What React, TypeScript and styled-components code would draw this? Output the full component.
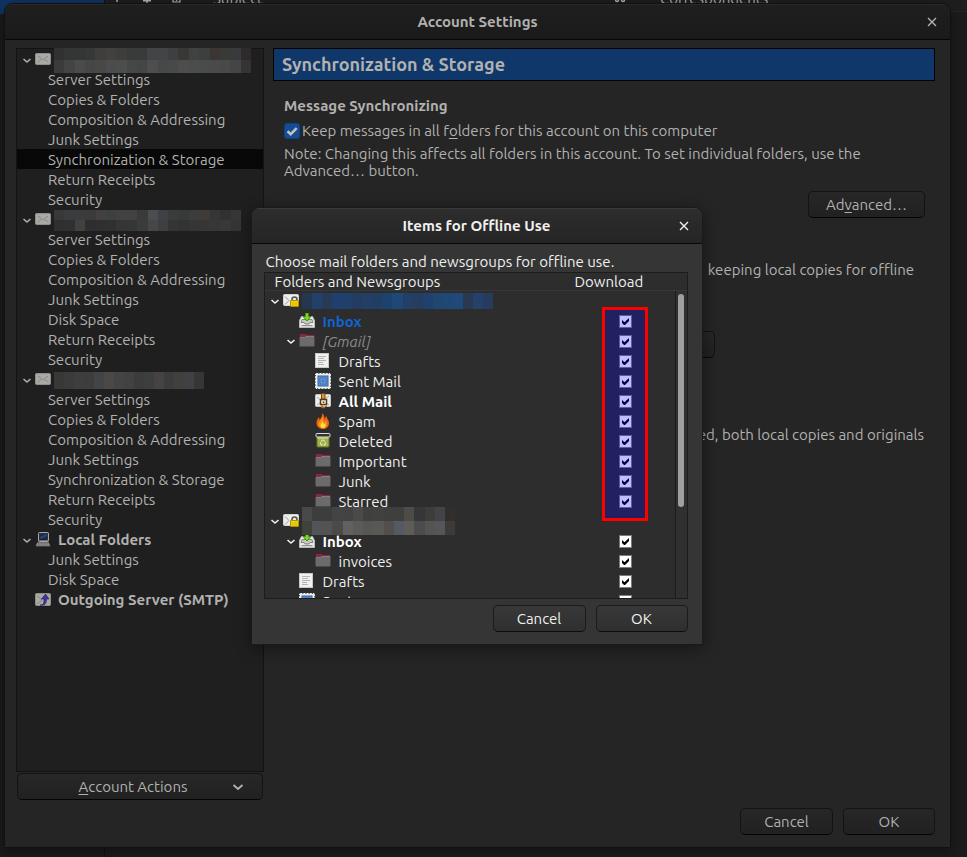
import React from 'react';
import styled, { createGlobalStyle, css } from 'styled-components';

const GlobalStyle = createGlobalStyle`
  *, *::before, *::after { box-sizing: border-box; }
  body {
    margin: 0;
    background: #1a1a1a;
    font-family: Ubuntu, "Noto Sans", sans-serif;
    font-size: 15px;
    line-height: 20px;
    color: #b1b1af;
  }
  button, input { font: inherit; color: inherit; margin: 0; }
`;

/* ---------- Mail window behind the dialogs ---------- */

const Desktop = styled.div`
  position: relative;
  display: flex;
  min-height: 100vh;
  padding: 3px 16px 9px 4px;
  overflow: hidden;
`;

const Backdrop = styled.div`
  position: absolute;
  inset: 0;
  display: flex;
  overflow: hidden;
`;

const FolderPane = styled.div`
  flex: 0 0 105px;
  border-right: 1px solid #111;
  background: linear-gradient(#0f3462 14px, #1b1b1b 14px);
`;

const ThreadPane = styled.div`
  flex: 1;
  background: #1c1c1c;
`;

const ThreadHeader = styled.div`
  display: flex;
  align-items: flex-start;
  height: 24px;
  margin-top: -12px;
  padding-left: 8px;
  line-height: 22px;
  border-bottom: 1px solid #262626;
  background: #1e1e1e;
`;

const ThreadColumn = styled.span<{ $width: number }>`
  flex: 0 0 ${p => p.$width}px;
`;

/* ---------- Windows ---------- */

const SettingsWindow = styled.section`
  position: relative;
  flex: 1;
  display: flex;
  flex-direction: column;
  min-width: 0;
  border: 1px solid #111;
  border-radius: 9px 9px 0 0;
  background: #252525;
  box-shadow: 0 3px 14px rgba(0, 0, 0, 0.4);
  overflow: hidden;
`;

const TitleBar = styled.header<{ $active?: boolean }>`
  display: grid;
  grid-template-columns: 36px 1fr 36px;
  align-items: center;
  flex: 0 0 36px;
  height: 36px;
  border-bottom: 1px solid #070707;
  background: ${p => (p.$active ? 'linear-gradient(#2d2d2d, #252525)' : 'linear-gradient(#1f1f1f, #1a1a1a)')};
  box-shadow: inset 0 1px ${p => (p.$active ? '#3a3a3a' : '#282828')};
`;

const Title = styled.h1`
  grid-column: 2;
  margin: 0;
  font-size: 15px;
  font-weight: 700;
  text-align: center;
`;

const CloseButton = styled.button`
  display: flex;
  justify-content: center;
  padding: 4px;
  border: 0;
  background: none;
`;

const PushButton = styled.button<{ $active?: boolean; $width?: number }>`
  width: ${p => p.$width || 92}px;
  height: 27px;
  padding: 0;
  border: 1px solid ${p => (p.$active ? '#1b1b1b' : '#131313')};
  border-bottom-color: ${p => (p.$active ? '#0c0c0c' : '#040404')};
  border-radius: 5px;
  background: ${p => (p.$active ? 'linear-gradient(#383838, #2f2f2f)' : 'linear-gradient(#272727, #212121)')};
`;

const ButtonRow = styled.footer`
  display: flex;
  justify-content: flex-end;
  gap: 10px;
`;

/* ---------- Account tree ---------- */

const Body = styled.div`
  flex: 1;
  display: grid;
  grid-template-columns: 248px minmax(0, 1fr);
  column-gap: 9px;
  padding: 8px 15px 8px 11px;
`;

const Sidebar = styled.nav`
  display: flex;
  flex-direction: column;
  gap: 1px;
`;

const Tree = styled.ul`
  flex: 1;
  margin: 0;
  padding: 0;
  border: 1px solid #131313;
  background: #1f1f1f;
  list-style: none;
`;

const Branch = styled.ul`
  margin: 0;
  padding: 0;
  list-style: none;
`;

const AccountRow = styled.div`
  display: flex;
  align-items: center;
  gap: 3px;
  height: 20px;
  padding: 2px 0 0 5px;
`;

const TreeLabel = styled.span`
  padding-left: 4px;
  font-weight: 700;
  white-space: nowrap;
`;

const PageLink = styled.a<{ $selected?: boolean }>`
  display: block;
  height: 20px;
  padding-left: 31px;
  color: inherit;
  line-height: 22px;
  text-decoration: none;
  white-space: nowrap;
  background: ${p => (p.$selected ? '#080808' : 'transparent')};
`;

const ActionsButton = styled.button`
  display: grid;
  grid-template-columns: 1fr 12px;
  align-items: center;
  height: 27px;
  margin: 0 1px;
  padding: 0 18px 0 16px;
  border: 1px solid #131313;
  border-bottom-color: #040404;
  border-radius: 5px;
  background: linear-gradient(#272727, #212121);
`;

const AccessKey = styled.u`
  text-underline-offset: 2px;
`;

/* ---------- Redacted account names ---------- */

const MosaicGrid = styled.span<{ $width: number; $height: number; $columns: number }>`
  z-index: 1;
  display: grid;
  flex: none;
  grid-template-columns: repeat(${p => p.$columns}, 1fr);
  width: ${p => p.$width}px;
  height: ${p => p.$height}px;
`;

const MosaicCell = styled.span<{ $tone: string }>`
  background: ${p => p.$tone};
`;

function Mosaic({ rows, width, height }: { rows: string[]; width: number; height: number }) {
  const cells = rows.map(r => r.split(' '));
  return (
    <MosaicGrid $width={width} $height={height} $columns={cells[0].length} aria-hidden>
      {cells.flat().map((c, i) => <MosaicCell key={i} $tone={`#${c}`} />)}
    </MosaicGrid>
  );
}

/* ---------- Settings page ---------- */

const Page = styled.main`
  display: flex;
  flex-direction: column;
`;

const PageHeader = styled.h2`
  margin: 0;
  height: 33px;
  padding: 0 8px;
  border: 1px solid #020202;
  background: #10376a;
  font-size: 18px;
  font-weight: 700;
  line-height: 31px;
`;

const PageBody = styled.div`
  display: flex;
  flex-direction: column;
  align-items: flex-start;
  padding: 15px 10px 0 11px;
`;

const SectionTitle = styled.h3`
  margin: 0 0 6px;
  font-size: 15px;
  line-height: 20px;
`;

const CheckLabel = styled.label`
  display: flex;
  align-items: center;
  gap: 2px;
  height: 18px;
  margin-bottom: 5px;
`;

const PageCheck = styled.input`
  appearance: none;
  width: 16px;
  height: 16px;
  border: 1px solid #11417f;
  border-radius: 3px;
  background: #154c94 url("data:image/svg+xml,%3Csvg xmlns='http://www.w3.org/2000/svg' viewBox='0 0 14 14'%3E%3Cpath d='M2.5 7.2l3.2 3 6-6' fill='none' stroke='%23c0c0c0' stroke-width='2.6'/%3E%3C/svg%3E");
`;

const Note = styled.p`
  max-width: 600px;
  margin: 0 0 12px;
  line-height: 17px;
`;

const Trailing = styled.div<{ $gap?: number; $inset?: number }>`
  display: flex;
  align-self: flex-end;
  margin-top: ${p => p.$gap || 0}px;
  margin-right: ${p => p.$inset || 0}px;
  line-height: 17px;
`;

const PageFooter = styled(ButtonRow)`
  padding: 0 15px 12px;
`;

/* ---------- Offline dialog ---------- */

const Dialog = styled.section`
  position: absolute;
  top: 207px;
  left: 50%;
  display: flex;
  flex-direction: column;
  width: 452px;
  margin-left: -233px;
  border: 1px solid #1a1a1a;
  border-radius: 9px 9px 0 0;
  background: #353535;
  color: #f0f0ee;
  box-shadow: 0 3px 16px rgba(0, 0, 0, 0.45);
  overflow: hidden;
`;

const DialogBody = styled.div`
  padding: 8px 14px 12px 12px;
`;

const Prompt = styled.p`
  margin: 0 0 0 2px;
`;

const TableFrame = styled.div`
  position: relative;
  height: 327px;
  margin-bottom: 6px;
  border: 1px solid #1c1c1c;
  background: #2d2d2d;
  overflow: hidden;
`;

const FolderTable = styled.table`
  width: 100%;
  table-layout: fixed;
  border-spacing: 0;

  td, th { padding: 0; }
`;

const ColumnHead = styled.th<{ $inset?: number; $width?: number }>`
  width: ${p => (p.$width ? `${p.$width}px` : 'auto')};
  height: 18px;
  border-bottom: 1px solid #373737;
  line-height: 17px;
  font-weight: 400;
  text-align: left;

  && { padding-left: ${p => p.$inset || 0}px; }
`;

const FolderCell = styled.div<{ $level: number }>`
  display: flex;
  align-items: center;
  height: 20px;
  padding-left: ${p => 5 + p.$level * 16}px;
  gap: 3px;
`;

const FolderName = styled.span<{ $kind?: string }>`
  padding: 2px 0 0 5px;
  white-space: nowrap;
  ${p => p.$kind === 'new' && css`font-weight: 700; color: #0f64d2;`}
  ${p => p.$kind === 'bold' && css`font-weight: 700; color: #fff;`}
  ${p => p.$kind === 'muted' && css`font-style: italic; color: #8c8c8c;`}
`;

const TwistySlot = styled.span`
  display: flex;
  flex: 0 0 10px;
`;

const DownloadCell = styled.div`
  display: flex;
  height: 20px;
  padding: 4px 0 0 44px;
`;

const DownloadCheck = styled.input`
  appearance: none;
  width: 13px;
  height: 13px;
  border: 1px solid #7c7c7c;
  background: #fff url("data:image/svg+xml,%3Csvg xmlns='http://www.w3.org/2000/svg' viewBox='0 0 11 11'%3E%3Cpath d='M2 4v3l2 2h1l4-4V2L4.500 6.200z' fill='%23000'/%3E%3C/svg%3E");
`;

const Highlight = styled.div`
  position: absolute;
  top: 34px;
  right: 39px;
  width: 46px;
  height: 214px;
  border: 3px solid #fe0000;
  background: rgba(0, 0, 255, 0.25);
  pointer-events: none;
`;

const ScrollTrack = styled.div`
  position: absolute;
  top: 18px;
  right: 0;
  bottom: 0;
  width: 12px;
  padding: 3px 3px 0 2px;
  border-left: 1px solid #1c1c1c;
  background: #303030;
`;

const ScrollThumb = styled.div`
  height: 213px;
  border-radius: 3px;
  background: #a0a09f;
`;

/* ---------- Icons ---------- */

const Glyph = styled.svg`
  display: block;
  flex: none;
`;

const ColumnGlyph = styled(Glyph)`
  margin-top: 5px;
`;

const Twisty = () => (
  <Glyph width="10" height="10" viewBox="0 0 10 10" fill="none" stroke="currentColor" strokeWidth="1.600">
    <path d="M1.500 4l3.500 3 3.500-3" />
  </Glyph>
);

const CloseGlyph = () => (
  <Glyph width="10" height="10" viewBox="0 0 10 10" stroke="currentColor" strokeWidth="1.400">
    <path d="M1 1l8 8M9 1L1 9" />
  </Glyph>
);

const icons: Record<string, React.ReactNode> = {
  mail: (
    <>
      <rect x="0.500" y="1.500" width="15" height="11" rx="1" fill="#a9a9a6" stroke="#8e8e8b" />
      <path d="M3 4l5 4 5-4M2.500 10.500L6 7.500M13.500 10.500L10 7.500" fill="none" stroke="#7b7b79" strokeWidth="0.800" />
    </>
  ),
  computer: (
    <>
      <rect x="3.500" y="0.500" width="10" height="9" rx="1" fill="#999" stroke="#a6a6a4" />
      <rect x="4.500" y="1.500" width="8" height="6.500" fill="#182c4f" stroke="#111" strokeWidth="0.600" />
      <path d="M5 5l7-3v2L5 7z" fill="#28477b" />
      <path d="M2.500 10.500h11l1.500 3.500H1z" fill="#999" stroke="#777" strokeWidth="0.700" />
      <path d="M3 11.700h10M2.500 13h11" stroke="#555" strokeWidth="0.700" strokeDasharray="1 .5" />
    </>
  ),
  smtp: (
    <>
      <rect x="0.500" y="1.500" width="15" height="12" rx="1" fill="#a9a9a6" stroke="#8e8e8b" />
      <path d="M2 3.500l5 4.500-5 4" fill="none" stroke="#777" strokeWidth="0.700" />
      <path d="M5 13c3.500 0 4-1.500 4-6H6.500L10.500 2l3.500 5h-2.500c0 5-2 7-6.500 6z" fill="#43369a" stroke="#231a60" strokeWidth="0.600" />
    </>
  ),
  secure: (
    <>
      <rect x="0.500" y="1.500" width="15" height="11" rx="1" fill="#ededeb" stroke="#d5d5d2" />
      <path d="M2 3.500l4 4-4 4" fill="none" stroke="#8a8a88" strokeWidth="0.900" />
      <path d="M9 8V6.500a2.500 2.500 0 0 1 5 0V8" fill="none" stroke="#555" strokeWidth="1.600" />
      <rect x="7.500" y="7.500" width="8" height="6" rx="0.500" fill="#f2d512" stroke="#b48f00" />
      <path d="M8.500 10h6M8.500 12h6" stroke="#d3b000" strokeWidth="0.800" />
    </>
  ),
  inbox: (
    <>
      <path d="M2.500 3.500h11l2 4v7H.5v-7z" fill="#ebebe8" stroke="#b9b9b5" />
      <path d="M3 6.500h10l1 3h-3L10 11H6L5 9.500H2z" fill="#c6c7c3" stroke="#70726e" strokeWidth="0.800" />
      <path d="M2.500 12.700h11" stroke="#7c7e7a" strokeWidth="1" />
      <path d="M6.500 0h3v3.500H12L8 8 4 3.500h2.500z" fill="#79d928" stroke="#3f8e04" />
    </>
  ),
  folder: (
    <>
      <path d="M.5 12.500V1.500q0-1 1-1h4.500l1.500 1h7q1 0 1 1v10q0 1-1 1h-13q-1 0-1-1z" fill="#812c40" stroke="#4b1f2b" />
      <path d="M.5 4.500h5l1.500-1h8.500v9q0 1-1 1h-13q-1 0-1-1z" fill="#6c6b6c" />
      <path d="M1 4.500h4.500l1.500-1h8" fill="none" stroke="#8b898a" strokeWidth="0.800" />
      <path d="M.5 5v7.500q0 1 1 1h13q1 0 1-1V4" fill="none" stroke="#4c4949" />
    </>
  ),
  draft: (
    <>
      <rect x="0.500" y="0.500" width="13" height="14" fill="#f1f1ef" stroke="#c8c8c5" />
      <path d="M3 3.500h8M3 5.500h6M3 7.500h8M3 9.500h5M3 11.500h6" stroke="#adadaa" strokeWidth="0.900" />
    </>
  ),
  sent: (
    <>
      <rect x="0" y="0" width="16" height="16" fill="#eeeeec" />
      <rect x="0" y="0" width="16" height="16" fill="none" stroke="#2d2d2d" strokeWidth="1.600" strokeDasharray="1.200 2" />
      <rect x="3" y="3" width="10" height="10" fill="#5e92d6" stroke="#33639f" />
      <path d="M5 5h6v6H5zM7 7h2v2H7z" fill="#6f9fdd" stroke="#3568ab" strokeWidth="0.800" />
    </>
  ),
  archive: (
    <>
      <rect x="0.500" y="1.500" width="15" height="12" rx="1" fill="#ededeb" stroke="#c6c6c2" />
      <path d="M2 4l5 4.500L2 12M14 3l-3 2M14 12l-3-2" fill="none" stroke="#999" strokeWidth="0.800" />
      <path d="M6.500.5h3.500V6H6.500z" fill="#d69a3f" stroke="#7b4a0d" />
      <rect x="5.500" y="6.500" width="6" height="5" fill="#f6f2ea" stroke="#60390b" strokeWidth="1.500" />
      <rect x="7.800" y="8.500" width="1.500" height="1.500" fill="#60390b" />
      <path d="M7 12.500v2h3M11 12.500v1.500" stroke="#a56a1a" strokeWidth="1.500" fill="none" />
    </>
  ),
  spam: (
    <>
      <path d="M7 0C8 3 5.500 5 5 7 4.500 6 4 5.200 4 4 2 6.500 1.500 8 1.500 10c0 3.500 2.800 6 6.500 6s6-2.500 6-6c0-3-2.200-4-2.500-7C10 4.500 10 5.500 9.800 6.500 9.500 4 9 1.500 7 0z" fill="#ee6511" />
      <path d="M7 3c1 3-3.500 5-3.500 8 0 2.200 2 4 4.500 4s4-1.800 4-4c0-1.500-.8-2.500-1-4-.8 1-1 2-1.500 3C8 8.500 9 5.500 7 3z" fill="#f9961c" />
      <path d="M7.500 8.500c.3 1.500-2 2-2 4 0 1.500 1 2.500 2.500 2.500s2.500-1 2.500-2.500c0-1-.5-1.500-.8-2-.4.5-.7 1-1 1.500-.4-1 .2-2.500-1.200-3.500z" fill="#fde23c" />
    </>
  ),
  trash: (
    <>
      <path d="M2 4h12v9q0 1-1 1H3q-1 0-1-1z" fill="#9fb24a" stroke="#62732a" />
      <rect x="1" y="0.500" width="14" height="3.500" rx="1" fill="#333" stroke="#dcdcd8" />
      <path d="M2.500 5h11" stroke="#dce6a3" strokeWidth="1" />
      <path d="M6 8.500l2-1.800 2 1.800M10.500 9.500L10 12H8.500M7.500 12H6l-.5-2.500" fill="none" stroke="#eef3cf" strokeWidth="1" />
    </>
  ),
};

const Icon = ({ name }: { name: string }) => (
  <Glyph width="16" height="16" viewBox="0 0 16 16" aria-hidden>{icons[name]}</Glyph>
);

/* ---------- Data ---------- */

const fullPages = ['Server Settings', 'Copies & Folders', 'Composition & Addressing', 'Junk Settings', 'Synchronization & Storage', 'Return Receipts', 'Security'];
const popPages = ['Server Settings', 'Copies & Folders', 'Composition & Addressing', 'Junk Settings', 'Disk Space', 'Return Receipts', 'Security'];

type MosaicData = { rows: string[]; width: number; height: number };
type Account = { icon: string; name?: string; mosaic?: MosaicData; pages: string[]; selected?: number };

const accounts: Account[] = [
  {
    icon: 'mail', pages: fullPages, selected: 4,
    mosaic: {
      width: 197, height: 25,
      rows: [
        '313131 343535 343535 363737 403e3d 42413e 3e3e3d 393a3a 393b3b 424446 434446 3d3f40 393835 414141 3c3e3f 3b3533 393938 383a3b 2e2c2a',
        '3a3b3a 434443 4a4b4b 454646 484847 4b4c4c 4c4d4d 464747 444646 4c4e4f 474848 484949 4d4d4d 4b4c4c 4a4b4b 484a4b 4a4949 444646 353432',
      ],
    },
  },
  {
    icon: 'mail', pages: popPages,
    mosaic: {
      width: 187, height: 21,
      rows: [
        '383838 3a3c3e 3b3c3e 3b3b3c 434041 3d4040 424242 434242 393b39 4c4d50 404144 3c3b3c 373a39 3c3c3c 3e3b39 363636 313131 363636',
        '2f2f2f 303030 41413f 2e2e2e 2e2f2f 303030 363535 353636 3a3b3a 464749 3e3f40 343536 303233 343636 373635 363736 373838 343434',
      ],
    },
  },
  {
    icon: 'mail', pages: fullPages,
    mosaic: { width: 150, height: 17, rows: ['383837 3a3b3a 3c3f3d 3d3d3c 434446 4b4846 424543 414340 3c3c3c 3d3e3e 454344 3c3c3d 40403d 3f4144 373634'] },
  },
  { icon: 'computer', name: 'Local Folders', pages: ['Junk Settings', 'Disk Space'] },
];

type Folder = { name?: string; icon: string; level: number; open?: boolean; kind?: string; download?: boolean; mosaic?: MosaicData };

const folders: Folder[] = [
  {
    icon: 'secure', level: 0, open: true,
    mosaic: { width: 192, height: 16, rows: ['26364c 22406a 253b58 1f406e 20406a 223d61 233f65 213e63 1e426f 1d4878 224067 243e61 1f416e 21466f 1e4877 204979 283a52 24406b 253c5e'] },
  },
  { name: 'Inbox', icon: 'inbox', level: 1, kind: 'new', download: true },
  { name: '[Gmail]', icon: 'folder', level: 1, open: true, kind: 'muted', download: true },
  { name: 'Drafts', icon: 'draft', level: 2, download: true },
  { name: 'Sent Mail', icon: 'sent', level: 2, download: true },
  { name: 'All Mail', icon: 'archive', level: 2, kind: 'bold', download: true },
  { name: 'Spam', icon: 'spam', level: 2, download: true },
  { name: 'Deleted', icon: 'trash', level: 2, download: true },
  { name: 'Important', icon: 'folder', level: 2, download: true },
  { name: 'Junk', icon: 'folder', level: 2, download: true },
  { name: 'Starred', icon: 'folder', level: 2, download: true },
  {
    icon: 'secure', level: 0, open: true,
    mosaic: {
      width: 154, height: 28,
      rows: [
        '484a4a 3c3d3d 3d3d3d 434444 424342 4a4a48 41403e 41413f 3e3f3e 3f3f3e 4d4c49 353638 3f3d3c 424447 302f2d',
        '3f433a 525457 525354 4b4a48 616160 5b5b5a 565654 585855 504f4d 535a61 5d5c58 4b4c4d 535454 555657 3d3a38',
      ],
    },
  },
  { name: 'Inbox', icon: 'inbox', level: 1, open: true, kind: 'bold', download: true },
  { name: 'invoices', icon: 'folder', level: 2, download: true },
  { name: 'Drafts', icon: 'draft', level: 1, download: true },
  { name: 'Sent', icon: 'sent', level: 1, download: true },
];

/* ---------- View ---------- */

export default function App() {
  return (
    <Desktop>
      <GlobalStyle />
      <Backdrop aria-hidden>
        <FolderPane />
        <ThreadPane>
          <ThreadHeader>
            <ThreadColumn $width={30}>
              <ColumnGlyph width="10" height="10" viewBox="0 0 10 10" fill="none" stroke="currentColor" strokeWidth="1.500"><path d="M1 1h3v8" /></ColumnGlyph>
            </ThreadColumn>
            <ThreadColumn $width={29}>
              <ColumnGlyph width="10" height="10" viewBox="0 0 10 10" fill="none" stroke="currentColor" strokeWidth="1.500"><path d="M0 7.800h8M4 0v10" /></ColumnGlyph>
            </ThreadColumn>
            <ThreadColumn $width={41}>
              <ColumnGlyph width="10" height="10" viewBox="0 0 10 10" fill="none" stroke="currentColor" strokeWidth="1.200"><path d="M1 0v9h7V0M4.500 0v8" /></ColumnGlyph>
            </ThreadColumn>
            <ThreadColumn $width={402}>Subject</ThreadColumn>
            <ThreadColumn $width={45}>
              <ColumnGlyph width="10" height="10" viewBox="0 0 10 10" fill="none" stroke="currentColor" strokeWidth="1.400"><circle cx="2" cy="7" r="1.500" /><circle cx="8" cy="7" r="1.500" /></ColumnGlyph>
            </ThreadColumn>
            <ThreadColumn $width={120}>Correspondents</ThreadColumn>
          </ThreadHeader>
        </ThreadPane>
      </Backdrop>

      <SettingsWindow aria-label="Account Settings">
        <TitleBar>
          <Title>Account Settings</Title>
          <CloseButton aria-label="Close"><CloseGlyph /></CloseButton>
        </TitleBar>
        <Body>
          <Sidebar>
            <Tree>
              {accounts.map((a, i) => (
                <li key={i}>
                  <AccountRow>
                    <Twisty />
                    <Icon name={a.icon} />
                    {a.mosaic ? <Mosaic {...a.mosaic} /> : <TreeLabel>{a.name}</TreeLabel>}
                  </AccountRow>
                  <Branch>
                    {a.pages.map((p, j) => (
                      <li key={p}><PageLink href="#" $selected={a.selected === j}>{p}</PageLink></li>
                    ))}
                  </Branch>
                </li>
              ))}
              <li>
                <AccountRow>
                  <TwistySlot />
                  <Icon name="smtp" />
                  <TreeLabel>Outgoing Server (SMTP)</TreeLabel>
                </AccountRow>
              </li>
            </Tree>
            <ActionsButton>
              <span><AccessKey>A</AccessKey>ccount Actions</span>
              <Glyph width="12" height="12" viewBox="0 0 12 12" fill="none" stroke="currentColor" strokeWidth="1.800">
                <path d="M1.500 4L6 8l4.500-4" />
              </Glyph>
            </ActionsButton>
          </Sidebar>

          <Page>
            <PageHeader>Synchronization &amp; Storage</PageHeader>
            <PageBody>
              <SectionTitle>Message Synchronizing</SectionTitle>
              <CheckLabel>
                <PageCheck type="checkbox" defaultChecked />
                <span>Keep messages in all f<AccessKey>o</AccessKey>lders for this account on this computer</span>
              </CheckLabel>
              <Note>Note: Changing this affects all folders in this account. To set individual folders, use the Advanced… button.</Note>
              <Trailing><PushButton $width={117}>Ad<AccessKey>v</AccessKey>anced…</PushButton></Trailing>
              <Trailing $gap={43} $inset={11}>keeping local copies for offline</Trailing>
              <Trailing $gap={53} $inset={210}><PushButton aria-label="Message size unit" /></Trailing>
              <Trailing $gap={68} $inset={1}>deleted, both local copies and originals</Trailing>
            </PageBody>
          </Page>
        </Body>
        <PageFooter>
          <PushButton $width={93}>Cancel</PushButton>
          <PushButton>OK</PushButton>
        </PageFooter>
      </SettingsWindow>

      <Dialog role="dialog" aria-label="Items for Offline Use">
        <TitleBar $active>
          <Title>Items for Offline Use</Title>
          <CloseButton aria-label="Close"><CloseGlyph /></CloseButton>
        </TitleBar>
        <DialogBody>
          <Prompt>Choose mail folders and newsgroups for offline use.</Prompt>
          <TableFrame>
            <FolderTable>
              <thead>
                <tr>
                  <ColumnHead $inset={10}>Folders and Newsgroups</ColumnHead>
                  <ColumnHead $width={112}>Download</ColumnHead>
                </tr>
              </thead>
              <tbody>
                {folders.map((f, i) => (
                  <tr key={i}>
                    <td>
                      <FolderCell $level={f.level}>
                        <TwistySlot>{f.open && <Twisty />}</TwistySlot>
                        <Icon name={f.icon} />
                        {f.mosaic ? <Mosaic {...f.mosaic} /> : <FolderName $kind={f.kind}>{f.name}</FolderName>}
                      </FolderCell>
                    </td>
                    <td>
                      {f.download && (
                        <DownloadCell>
                          <DownloadCheck type="checkbox" defaultChecked aria-label={`Download ${f.name}`} />
                        </DownloadCell>
                      )}
                    </td>
                  </tr>
                ))}
              </tbody>
            </FolderTable>
            <Highlight />
            <ScrollTrack><ScrollThumb /></ScrollTrack>
          </TableFrame>
          <ButtonRow>
            <PushButton $active $width={93}>Cancel</PushButton>
            <PushButton $active>OK</PushButton>
          </ButtonRow>
        </DialogBody>
      </Dialog>
    </Desktop>
  );
}
